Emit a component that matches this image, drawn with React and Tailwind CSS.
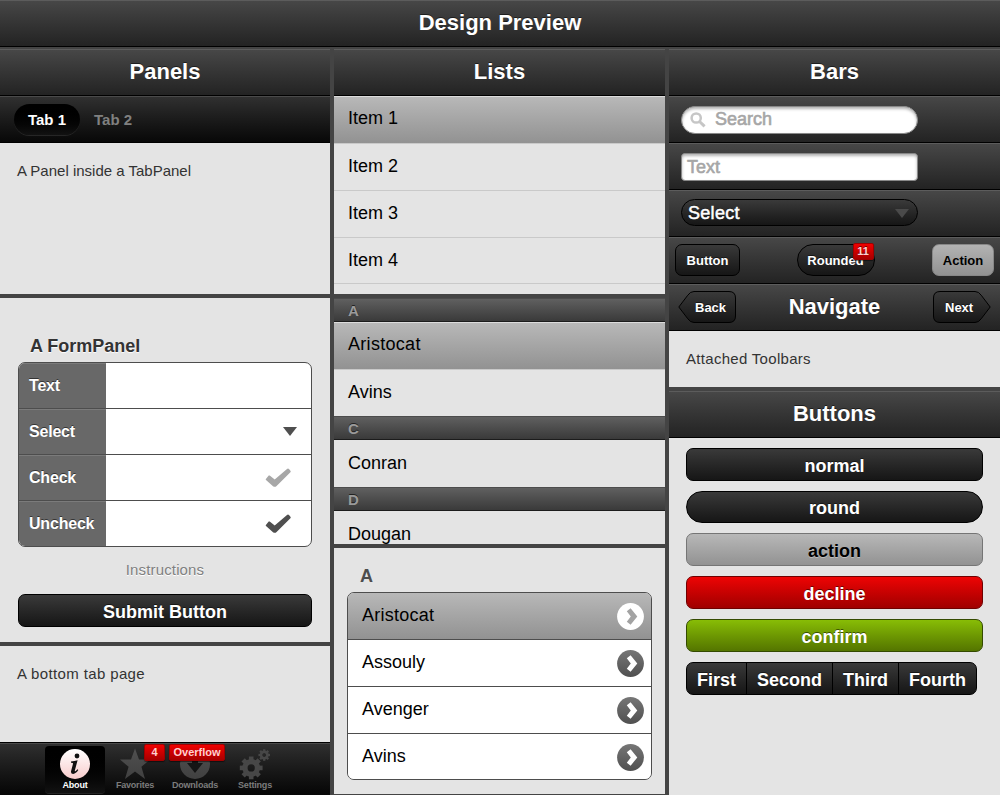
const DARK_BAR =
  "bg-linear-to-b from-[#474747] to-[#232323] border-t border-t-[#5c5c5c] border-b border-b-black";
const DARK_BUTTON = "bg-linear-to-b from-[#3a3a3a] to-[#161616] border border-black text-white";
const SHADOW_DARK = "[text-shadow:0_-1px_0_rgba(0,0,0,0.5)]";
const SHADOW_LIGHT = "[text-shadow:0_1px_0_rgba(255,255,255,0.35)]";

function TitleBar({ children }) {
  return (
    <div
      className={`flex h-[47px] shrink-0 items-center justify-center pb-[2px] text-[22px] leading-none font-bold text-white ${DARK_BAR} ${SHADOW_DARK}`}
    >
      {children}
    </div>
  );
}

function Toolbar({ className = "", children }) {
  return <div className={`flex h-[47px] shrink-0 items-center ${DARK_BAR} ${className}`}>{children}</div>;
}

function Badge({ className = "", children }) {
  return (
    <span
      className={`absolute flex h-[17px] items-center justify-center rounded-[2px] border border-[#a00000] bg-linear-to-b from-[#f00000] to-[#a80000] text-[11px] leading-none font-bold text-[#ffd0d0] shadow-[0_1px_1px_rgba(0,0,0,0.5)] ${className}`}
    >
      {children}
    </span>
  );
}

function Gap() {
  return <div className="h-1 shrink-0" />;
}

function Check({ color }) {
  return (
    <svg width="26" height="20" viewBox="0 0 26 20" className="mr-[20px]">
      <path
        d="M0.9 10.9L3.7 7.6Q4.2 7.3 4.7 7.6L9.7 11.5L22 0.9Q23.2 0 24 1.1L25.6 3Q26 3.7 25.4 4.3L11.6 18Q9.9 19.6 8 18.2L1 12Q0.4 11.4 0.9 10.9Z"
        fill={color}
      />
    </svg>
  );
}

function Triangle({ className, color }) {
  return (
    <svg width="14" height="9" viewBox="0 0 14 9" className={className}>
      <path d="M0 0H14L7 9Z" fill={color} />
    </svg>
  );
}

function FormRow({ label, children, last }) {
  return (
    <div className={`flex ${last ? "h-[45px]" : "h-[46px] border-b border-[#4d4d4d]"}`}>
      <div
        className={`flex w-[87px] items-center border-t border-[#7b7b7b] bg-[#686868] pl-[10px] text-[16px] leading-none font-bold tracking-[-0.2px] text-white ${SHADOW_DARK}`}
      >
        {label}
      </div>
      <div className="flex flex-1 items-center justify-end">{children}</div>
    </div>
  );
}

const SELECTED = "bg-linear-to-b from-[#b8b8b8] to-[#929292]";

function ListItem({ selected, className = "h-[47px] pb-[3px]", children }) {
  return (
    <div
      className={`flex shrink-0 items-center border-b border-[#c9c9c9] pl-[14px] text-[18px] leading-none text-black ${selected ? SELECTED + " border-t border-t-[#dcdcdc]" : ""} ${className}`}
    >
      {children}
    </div>
  );
}

function ListHeader({ children }) {
  return (
    <div className="flex h-6 shrink-0 items-center border-t border-b border-t-[#4c4c4c] border-b-[#1c1c1c] bg-linear-to-b from-[#606060] to-[#3a3a3a] pl-[14px] text-[15px] leading-none font-bold text-[#9a9a9a] [text-shadow:0_-1px_0_rgba(0,0,0,0.6)]">
      {children}
    </div>
  );
}

function Disclosure({ selected }) {
  return (
    <svg width="27" height="27" viewBox="0 0 27 27">
      <defs>
        <linearGradient id="disc" x1="0" y1="0" x2="0" y2="1">
          <stop offset="0" stopColor="#767676" />
          <stop offset="1" stopColor="#505050" />
        </linearGradient>
      </defs>
      <circle cx="13.5" cy="13.5" r="13.4" fill={selected ? "#fff" : "url(#disc)"} />
      <path d="M9.8 8.3L13.6 5.3L20.3 13.5L13.6 21.7L9.8 18.7L13.8 13.5Z" fill={selected ? "#a3a3a3" : "#fff"} />
    </svg>
  );
}

function GroupRow({ selected, last, children }) {
  return (
    <div
      className={`flex items-center justify-between pr-[7px] pl-[14px] text-[18px] leading-none text-black ${last ? "h-[45px] pt-px" : "h-[47px] border-b border-[#4d4d4d]"} ${selected ? SELECTED + " tracking-[0.25px]" : "bg-white"}`}
    >
      <span className="pb-[3px]">{children}</span>
      <Disclosure selected={selected} />
    </div>
  );
}

function BigButton({ className, children }) {
  return (
    <div
      className={`flex items-center justify-center pt-[2px] text-[18px] leading-none font-bold ${className}`}
    >
      {children}
    </div>
  );
}

function ArrowButton({ flip, children }) {
  return (
    <div className={`relative flex h-8 w-[58px] items-center text-[13px] leading-none font-bold text-white ${flip ? "pl-[12px]" : "pl-[17px]"} ${SHADOW_DARK}`}>
      <svg
        width="58"
        height="32"
        viewBox="0 0 58 32"
        className={`absolute inset-0 ${flip ? "-scale-x-100" : ""}`}
      >
        <defs>
          <linearGradient id="arrow" x1="0" y1="0" x2="0" y2="1">
            <stop offset="0" stopColor="#3a3a3a" />
            <stop offset="1" stopColor="#161616" />
          </linearGradient>
        </defs>
        <path
          d="M0.8 16L9.8 4.2Q12.3 0.5 16 0.5H51Q57.5 0.5 57.5 7V25Q57.5 31.5 51 31.5H16Q12.3 31.5 9.8 27.8Z"
          fill="url(#arrow)"
          stroke="#000"
        />
      </svg>
      <span className="relative">{children}</span>
    </div>
  );
}

function Gear({ cx, cy, r, teeth, hole, toothW }) {
  const items = Array.from({ length: teeth }, (_, i) => (i * 360) / teeth);
  return (
    <g transform={`translate(${cx} ${cy})`}>
      <circle r={(r * 0.78 + hole) / 2} fill="none" stroke="#474747" strokeWidth={r * 0.78 - hole} />
      {items.map((a) => (
        <rect key={a} x={-toothW / 2} y={-r} width={toothW} height={r * 0.4} fill="#474747" transform={`rotate(${a})`} />
      ))}
    </g>
  );
}

function TabIcon({ kind }) {
  return (
    <svg width="32" height="32" viewBox="0 0 32 32" className="shrink-0">
      <defs>
        <linearGradient id="tabicon" gradientUnits="userSpaceOnUse" x1="0" y1="0" x2="0" y2="32">
          <stop offset="0" stopColor="#505050" />
          <stop offset="1" stopColor="#404040" />
        </linearGradient>
        <linearGradient id="about" x1="0" y1="0" x2="0" y2="1">
          <stop offset="0" stopColor="#fff" />
          <stop offset="1" stopColor="#f8cccc" />
        </linearGradient>
      </defs>
      {kind === "about" && (
        <>
          <circle cx="16" cy="16" r="15" fill="url(#about)" />
          <circle cx="18" cy="8" r="2.4" fill="#111" />
          <path
            d="M12 13.6Q15.5 13 18.6 12.2L15.9 22.3Q15.6 23.6 16.4 23.3Q17.2 22.9 18.4 21.3L19.3 22Q16.9 25.8 14.2 25.9Q11.5 25.8 12.1 23L14 15.8Q14.3 14.6 12 14.7Z"
            fill="#111"
          />
        </>
      )}
      {kind === "star" && (
        <path
          d="M16 0.5L20 11.6H31L22.4 18.8L26 31L16 23.6L6 31L9.6 18.8L1 11.6H12Z"
          fill="url(#tabicon)"
        />
      )}
      {kind === "down" && (
        <>
          <circle cx="16" cy="16" r="15" fill="url(#tabicon)" />
          <path d="M13 7H19V15H24L16 25L8 15H13Z" fill="#151515" />
        </>
      )}
      {kind === "gear" && (
        <>
          <Gear cx={12.2} cy={19.9} r={11.4} teeth={8} hole={3.6} toothW={4.6} />
          <Gear cx={25.2} cy={7} r={5.8} teeth={8} hole={1.9} toothW={2.3} />
        </>
      )}
    </svg>
  );
}

function Tab({ kind, label, active, children }) {
  return (
    <div
      className={`relative flex h-[47px] w-[60px] flex-col items-center rounded-[4px] pt-[2px] text-[9px] leading-[11px] font-bold tracking-[-0.2px] ${active ? "bg-linear-to-b from-black to-[#121212] text-white shadow-[0_1px_0_#242424]" : "text-[#7c7c7c]"}`}
    >
      <TabIcon kind={kind} />
      {label}
      {children}
    </div>
  );
}

const FIELD = "flex h-7 w-[237px] items-center border border-[#888] bg-white text-[18px] leading-none text-[#a6a6a6] shadow-[inset_0_2px_3px_rgba(0,0,0,0.3)] [-webkit-text-stroke:0.6px_#a6a6a6]";

export default function App() {
  return (
    <div className="flex h-[795px] w-[1000px] flex-col overflow-hidden bg-[#444] font-['Liberation_Sans',Arial,sans-serif] text-[#333]">
      <TitleBar>Design Preview</TitleBar>
      <div className="flex min-h-0 flex-1 gap-1 pt-[2px]">
        <div className="flex w-[330px] flex-col">
          <TitleBar>Panels</TitleBar>
          <div className="flex h-[47px] items-center border-t border-b border-t-[#4a4a4a] border-b-black bg-linear-to-b from-[#303030] to-[#080808] pb-px pl-[14px] text-[15px] leading-none font-bold">
            <div className="flex h-[31px] w-[66px] items-center justify-center rounded-full bg-linear-to-b from-black to-[#121212] pt-px text-white shadow-[0_1px_0_#262626]">
              Tab 1
            </div>
            <div className="pt-px pl-[14px] text-[#808080]">Tab 2</div>
          </div>
          <div className="h-[151px] bg-[#e4e4e4] pt-[20px] pl-[17px] text-[15px] leading-[16px]">
            A Panel inside a TabPanel
          </div>
          <Gap />
          <div className="h-[344px] bg-[#e4e4e4] px-[18px] pt-[38px]">
            <div className="h-[26px] pl-3 text-[18px] leading-[21px] font-bold [text-shadow:0_1px_1px_#fff]">
              A FormPanel
            </div>
            <div className="overflow-hidden rounded-[7px] border border-[#4d4d4d] bg-white">
              <FormRow label="Text" />
              <FormRow label="Select">
                <Triangle className="mr-[14px]" color="#4f4f4f" />
              </FormRow>
              <FormRow label="Check">
                <Check color="#a7a7a7" />
              </FormRow>
              <FormRow label="Uncheck" last>
                <Check color="#4f4f4f" />
              </FormRow>
            </div>
            <div className="flex h-[47px] items-center justify-center pb-[2px] text-[15px] leading-none tracking-[0.15px] text-[#808080] [text-shadow:0_1px_0_#fff]">
              Instructions
            </div>
            <BigButton className={`h-[33px] rounded-[7px] ${DARK_BUTTON} ${SHADOW_DARK}`}>Submit Button</BigButton>
          </div>
          <Gap />
          <div className="h-24 bg-[#e4e4e4] pt-[20px] pl-[17px] text-[15px] leading-[16px] tracking-[0.37px]">
            A bottom tab page
          </div>
          <div className="flex h-[53px] justify-center border-t border-black bg-linear-to-b from-[#303030] to-[#060606] pt-[3px] shadow-[inset_0_1px_0_#4a4a4a]">
            <Tab kind="about" label="About" active />
            <Tab kind="star" label="Favorites">
              <Badge className="top-[-2px] left-[39px] w-[21px]">4</Badge>
            </Tab>
            <Tab kind="down" label="Downloads">
              <Badge className="top-[-2px] left-1 w-[56px] tracking-normal">Overflow</Badge>
            </Tab>
            <Tab kind="gear" label="Settings" />
          </div>
        </div>

        <div className="flex w-[331px] flex-col">
          <TitleBar>Lists</TitleBar>
          <div className="flex h-[198px] flex-col overflow-hidden bg-[#e4e4e4]">
            <ListItem selected className="h-12 pb-[5px]">Item 1</ListItem>
            <ListItem>Item 2</ListItem>
            <ListItem>Item 3</ListItem>
            <ListItem className="h-[46px] pb-px">Item 4</ListItem>
          </div>
          <Gap />
          <div className="flex h-[246px] flex-col overflow-hidden bg-[#e4e4e4]">
            <ListHeader>A</ListHeader>
            <ListItem selected className="h-12 pb-[5px] tracking-[0.3px]">Aristocat</ListItem>
            <ListItem className="h-[46px] border-b-0 pb-[3px]">Avins</ListItem>
            <ListHeader>C</ListHeader>
            <ListItem className="h-[47px] border-b-0 pb-px">Conran</ListItem>
            <ListHeader>D</ListHeader>
            <ListItem className="h-[47px] pb-px">Dougan</ListItem>
          </div>
          <Gap />
          <div className="h-[246px] bg-[#e4e4e4] px-[13px] pt-[18px]">
            <div className="h-[26px] pl-[13px] text-[18px] leading-[21px] font-bold text-[#4d4d4d]">A</div>
            <div className="overflow-hidden rounded-[7px] border border-[#4d4d4d]">
              <GroupRow selected>Aristocat</GroupRow>
              <GroupRow>Assouly</GroupRow>
              <GroupRow>Avenger</GroupRow>
              <GroupRow last>Avins</GroupRow>
            </div>
          </div>
        </div>

        <div className="flex w-[331px] flex-col">
          <TitleBar>Bars</TitleBar>
          <Toolbar className="pl-3">
            <div className={`${FIELD} rounded-full pb-px pl-[8px]`}>
              <svg width="16" height="16" viewBox="0 0 16 16" className="mt-[2px] mr-[9px]">
                <circle cx="6.2" cy="6" r="4.6" fill="none" stroke="#c6c6c6" strokeWidth="2.5" />
                <path d="M9.5 9.5L14.6 14.4" stroke="#c6c6c6" strokeWidth="3" />
              </svg>
              Search
            </div>
          </Toolbar>
          <Toolbar className="pl-3">
            <div className={`${FIELD} rounded-[4px] pl-[5px]`}>Text</div>
          </Toolbar>
          <Toolbar className="pb-[2px] pl-3">
            <div className={`flex h-[27px] w-[237px] items-center justify-between rounded-full pt-px pr-[8px] pl-[6px] text-[18px] leading-none tracking-[0.3px] [-webkit-text-stroke:0.5px_#fff] ${DARK_BUTTON} ${SHADOW_DARK}`}>
              Select
              <Triangle className="" color="#4a4a4a" />
            </div>
          </Toolbar>
          <Toolbar className="justify-between px-[6px] pb-px text-[13px] leading-none font-bold">
            <div className={`flex h-8 w-[65px] items-center justify-center rounded-[7px] ${DARK_BUTTON} ${SHADOW_DARK}`}>
              Button
            </div>
            <div className={`relative mr-px flex h-8 w-[78px] items-center justify-center rounded-full ${DARK_BUTTON} ${SHADOW_DARK}`}>
              Rounded
              <Badge className="top-[-2px] left-[55px] w-[21px]">11</Badge>
            </div>
            <div className="flex h-8 w-[62px] items-center justify-center rounded-[7px] border border-[#888] bg-linear-to-b from-[#b3b3b3] to-[#929292] text-black">
              Action
            </div>
          </Toolbar>
          <Toolbar className="justify-between px-[9px] pb-px">
            <ArrowButton>Back</ArrowButton>
            <div className={`pb-px text-[22px] leading-none font-bold text-white ${SHADOW_DARK}`}>Navigate</div>
            <ArrowButton flip>Next</ArrowButton>
          </Toolbar>
          <div className="h-14 bg-[#e4e4e4] pt-[20px] pl-[17px] text-[15px] leading-[16px] tracking-[0.3px]">
            Attached Toolbars
          </div>
          <Gap />
          <TitleBar>Buttons</TitleBar>
          <div className="flex flex-1 flex-col gap-[10px] bg-[#e4e4e4] pt-[10px] pr-[17px] pl-[17px]">
            <BigButton className={`h-[33px] rounded-[7px] ${DARK_BUTTON} ${SHADOW_DARK}`}>normal</BigButton>
            <BigButton className={`h-8 rounded-full ${DARK_BUTTON} ${SHADOW_DARK}`}>round</BigButton>
            <BigButton className={`h-[33px] rounded-[7px] border border-[#757575] bg-linear-to-b from-[#b8b8b8] to-[#929292] text-black ${SHADOW_LIGHT}`}>
              action
            </BigButton>
            <BigButton className={`h-[33px] rounded-[7px] border border-[#700000] bg-linear-to-b from-[#ee0404] to-[#a00000] text-white ${SHADOW_DARK}`}>
              decline
            </BigButton>
            <BigButton className={`h-[33px] rounded-[7px] border border-[#344a00] bg-linear-to-b from-[#88bd06] to-[#547500] text-white ${SHADOW_DARK}`}>
              confirm
            </BigButton>
            <div className={`flex h-[33px] w-[291px] divide-x divide-black overflow-hidden rounded-[7px] ${DARK_BUTTON} ${SHADOW_DARK}`}>
              <BigButton className="w-[60px]">First</BigButton>
              <BigButton className="w-[86px]">Second</BigButton>
              <BigButton className="w-[66px]">Third</BigButton>
              <BigButton className="flex-1">Fourth</BigButton>
            </div>
          </div>
        </div>
      </div>
    </div>
  );
}
